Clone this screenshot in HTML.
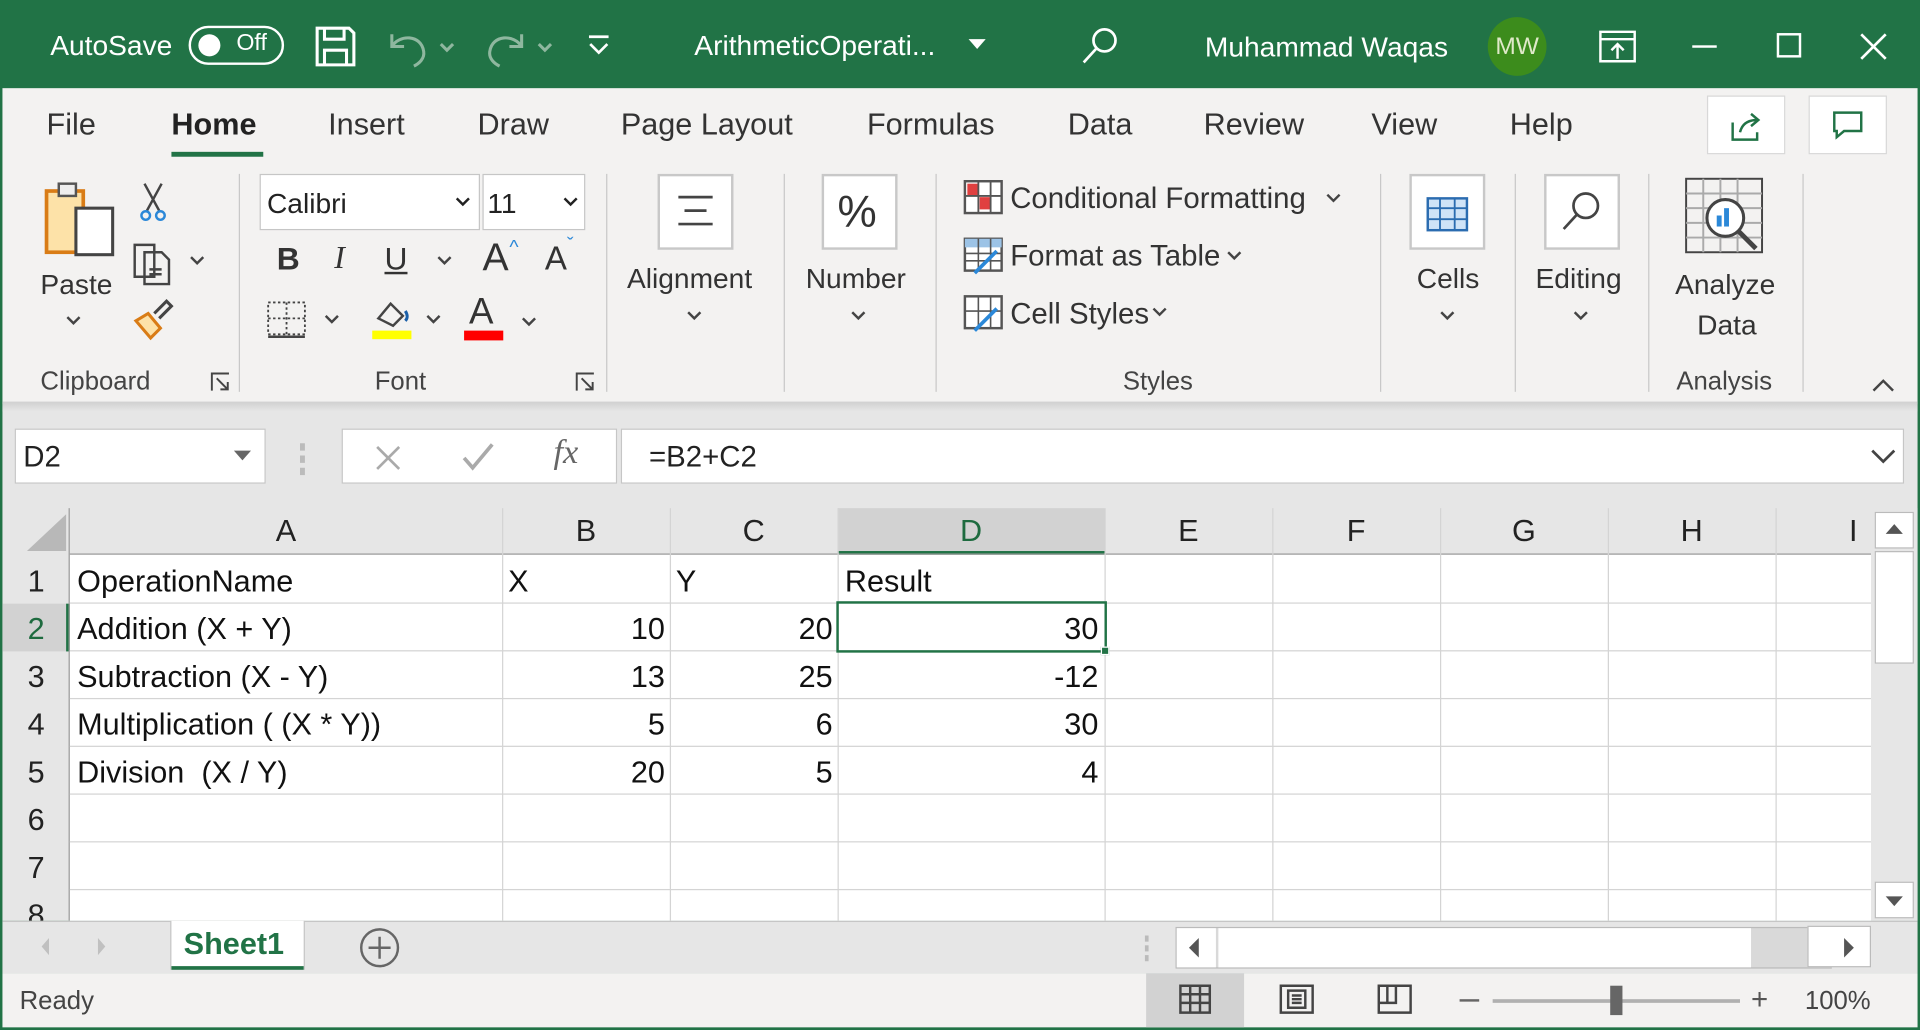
<!DOCTYPE html>
<html><head><meta charset="utf-8"><style>
*{margin:0;padding:0;box-sizing:border-box}
html,body{width:1920px;height:1030px;overflow:hidden;background:#217346}
#w{position:absolute;left:0;top:0;width:1568px;height:841px;transform:scale(1.22449);transform-origin:0 0;font-family:"Liberation Sans",sans-serif;color:#222;background:#217346}
.a{position:absolute;white-space:nowrap}
.t{color:#fff;font-size:23px}
.tab{font-size:25px;color:#333;top:88px}
.gl{font-size:21px;color:#444;top:300px}
.sep{position:absolute;width:1px;background:#c8c8c8;top:142px;height:178px}
.cell{position:absolute;font-size:25px;color:#111}
.hd{position:absolute;font-size:25px;color:#222;text-align:center}
.vl{position:absolute;top:415px;width:1px;height:337px;background:#d4d4d4}
.hl{position:absolute;left:57px;width:1471px;height:1px;background:#d4d4d4}
</style></head><body><div id="w">
<!-- title bar -->
<div class="a t" style="left:41px;top:24px">AutoSave</div>
<div class="a" style="left:154px;top:21px;width:78px;height:32px;border:2px solid #fff;border-radius:16px"></div>
<div class="a" style="left:162px;top:28px;width:18px;height:18px;border-radius:9px;background:#fff"></div>
<div class="a t" style="left:193px;top:25px;font-size:19px">Off</div>
<svg class="a" style="left:256px;top:20px" width="36" height="36" viewBox="0 0 36 36" fill="none" stroke="#fff" stroke-width="2.5"><path d="M3 3h26l4 4v26H3z M9 3v9h16V3 M9 33V21h18v12"/></svg>
<svg class="a" style="left:314px;top:20px" width="62" height="36" viewBox="0 0 62 36" fill="none" stroke="#8fb79f" stroke-width="2.5"><path d="M6 8v10h10 M6 18c6-10 24-10 26 4 1 6-4 10-8 12"/><path d="M46 16l5 5 5-5"/></svg>
<svg class="a" style="left:394px;top:20px" width="62" height="36" viewBox="0 0 62 36" fill="none" stroke="#8fb79f" stroke-width="2.5"><path d="M32 8v10H22 M32 18c-6-10-24-10-26 4-1 6 4 10 8 12"/><path d="M46 16l5 5 5-5"/></svg>
<svg class="a" style="left:478px;top:26px" width="22" height="22" viewBox="0 0 22 22" fill="none" stroke="#fff" stroke-width="2.2"><path d="M3 4h16 M4 10l7 7 7-7"/></svg>
<div class="a t" style="left:567px;top:24px">ArithmeticOperati...</div>
<svg class="a" style="left:790px;top:30px" width="16" height="12"><path d="M1 2h14L8 10z" fill="#fff"/></svg>
<svg class="a" style="left:882px;top:20px" width="34" height="34" fill="none" stroke="#fff" stroke-width="2.2"><circle cx="20" cy="13" r="9"/><path d="M13 20L3 31"/></svg>
<div class="a t" style="left:984px;top:25px">Muhammad Waqas</div>
<div class="a" style="left:1215px;top:14px;width:48px;height:48px;border-radius:24px;background:#3c8c1c;color:#dfe9c8;font-size:20px;text-align:center;line-height:48px">MW</div>
<svg class="a" style="left:1305px;top:24px" width="32" height="28" fill="none" stroke="#fff" stroke-width="2"><path d="M2 2h28v24H2z M2 8h28 M16 24V12 M11 17l5-5 5 5"/></svg>
<div class="a" style="left:1382px;top:37px;width:20px;height:2px;background:#fff"></div>
<div class="a" style="left:1451px;top:27px;width:20px;height:20px;border:2px solid #fff"></div>
<svg class="a" style="left:1518px;top:26px" width="24" height="24" stroke="#fff" stroke-width="2.2"><path d="M2 2l20 20M22 2L2 22"/></svg>
<!-- ribbon -->
<div class="a" style="left:2px;top:72px;width:1564px;height:258px;background:#f3f2f1"></div>
<div class="a tab" style="left:38px">File</div>
<div class="a tab" style="left:140px;font-weight:bold;color:#222">Home</div>
<div class="a" style="left:140px;top:124px;width:75px;height:4px;background:#217346"></div>
<div class="a tab" style="left:268px">Insert</div>
<div class="a tab" style="left:390px">Draw</div>
<div class="a tab" style="left:507px">Page Layout</div>
<div class="a tab" style="left:708px">Formulas</div>
<div class="a tab" style="left:872px">Data</div>
<div class="a tab" style="left:983px">Review</div>
<div class="a tab" style="left:1120px">View</div>
<div class="a tab" style="left:1233px">Help</div>
<div class="a" style="left:1394px;top:78px;width:64px;height:48px;background:#fff;border:1px solid #d8d8d8"></div>
<svg class="a" style="left:1412px;top:90px" width="28" height="26" fill="none" stroke="#217346" stroke-width="2"><path d="M3 10v14h20v-6 M9 18c2-8 8-10 14-10 M18 3l6 5-6 5"/></svg>
<div class="a" style="left:1477px;top:78px;width:64px;height:48px;background:#fff;border:1px solid #d8d8d8"></div>
<svg class="a" style="left:1496px;top:90px" width="26" height="24" fill="none" stroke="#217346" stroke-width="2"><path d="M2 2h22v15H10l-6 5v-5H2z"/></svg>
<!-- clipboard -->
<svg class="a" style="left:34px;top:148px" width="62" height="64"><rect x="4" y="8" width="30" height="50" fill="#fde2a8" stroke="#d97c16" stroke-width="3"/><rect x="14" y="2" width="14" height="10" fill="#eee" stroke="#555" stroke-width="2"/><rect x="28" y="22" width="30" height="38" fill="#fff" stroke="#444" stroke-width="2.5"/></svg>
<div class="a" style="left:33px;top:219px;font-size:23px;color:#333">Paste</div>
<svg class="a" style="left:52px;top:256px" width="16" height="12" fill="none" stroke="#444" stroke-width="2"><path d="M3 3l5 5 5-5"/></svg>
<svg class="a" style="left:112px;top:148px" width="26" height="34" fill="none" stroke="#444" stroke-width="2"><path d="M6 2l12 22 M20 2L8 24"/><circle cx="7" cy="28" r="3.5" stroke="#2b88d8"/><circle cx="19" cy="28" r="3.5" stroke="#2b88d8"/></svg>
<svg class="a" style="left:108px;top:198px" width="60" height="36" fill="none" stroke="#444" stroke-width="2"><path d="M2 2h16v26H2z M10 8h14l6 6v20H10z M14 22h10 M14 26h10"/><path d="M48 12l5 5 5-5"/></svg>
<svg class="a" style="left:108px;top:244px" width="36" height="36" fill="none" stroke="#d97c16" stroke-width="2.5"><path d="M3 18l10-6 10 12-8 8z" fill="#fde2a8"/><path d="M18 12l10-10 4 4-10 10" stroke="#444"/></svg>
<div class="a gl" style="left:33px">Clipboard</div>
<svg class="a" style="left:172px;top:304px" width="16" height="16" fill="none" stroke="#444" stroke-width="1.6"><path d="M1 15V1h14 M5 5l9 9 M14 8v6H8"/></svg>
<div class="sep" style="left:195px"></div>
<!-- font -->
<div class="a" style="left:212px;top:142px;width:180px;height:46px;background:#fff;border:1px solid #c6c6c6"></div>
<div class="a" style="left:218px;top:153px;font-size:23px">Calibri</div>
<svg class="a" style="left:371px;top:160px" width="14" height="10" fill="none" stroke="#222" stroke-width="2"><path d="M2 2l5 5 5-5"/></svg>
<div class="a" style="left:394px;top:142px;width:84px;height:46px;background:#fff;border:1px solid #c6c6c6"></div>
<div class="a" style="left:398px;top:153px;font-size:23px">11</div>
<svg class="a" style="left:459px;top:160px" width="14" height="10" fill="none" stroke="#222" stroke-width="2"><path d="M2 2l5 5 5-5"/></svg>
<div class="a" style="left:226px;top:196px;font-size:26px;font-weight:bold;color:#333">B</div>
<div class="a" style="left:273px;top:196px;font-size:26px;font-style:italic;font-family:'Liberation Serif',serif;color:#333">I</div>
<div class="a" style="left:314px;top:196px;font-size:26px;text-decoration:underline;color:#333">U</div>
<svg class="a" style="left:356px;top:208px" width="14" height="10" fill="none" stroke="#444" stroke-width="2"><path d="M2 2l5 5 5-5"/></svg>
<div class="a" style="left:307px;top:230px;width:1px;height:0"></div>
<div class="a" style="left:394px;top:192px;font-size:32px;color:#333">A</div>
<div class="a" style="left:416px;top:194px;font-size:16px;color:#2b88d8">^</div>
<div class="a" style="left:445px;top:196px;font-size:27px;color:#333">A</div>
<div class="a" style="left:463px;top:192px;font-size:16px;color:#2b88d8">ˇ</div>
<svg class="a" style="left:216px;top:244px" width="62" height="34" fill="none" stroke="#444" stroke-width="1.5" stroke-dasharray="2 2"><path d="M3 3h30v26H3z M18 3v26 M3 16h30"/><path d="M3 31h30" stroke-dasharray="none" stroke-width="2"/><path d="M50 14l5 5 5-5" stroke-dasharray="none" stroke-width="2"/></svg>
<svg class="a" style="left:303px;top:242px" width="62" height="38"><path d="M6 18l10-12 10 10-8 8z" fill="none" stroke="#444" stroke-width="2"/><path d="M28 12c2 3 2 6 0 8" stroke="#1a5fa8" stroke-width="2.5" fill="none"/><rect x="1" y="28" width="32" height="7" fill="#ffff00"/><path d="M46 16l5 5 5-5" fill="none" stroke="#444" stroke-width="2"/></svg>
<div class="a" style="left:383px;top:238px;font-size:30px;color:#333">A</div>
<div class="a" style="left:379px;top:270px;width:32px;height:8px;background:#f00"></div>
<svg class="a" style="left:425px;top:258px" width="14" height="10" fill="none" stroke="#444" stroke-width="2"><path d="M2 2l5 5 5-5"/></svg>
<div class="a gl" style="left:306px">Font</div>
<svg class="a" style="left:470px;top:304px" width="16" height="16" fill="none" stroke="#444" stroke-width="1.6"><path d="M1 15V1h14 M5 5l9 9 M14 8v6H8"/></svg>
<div class="sep" style="left:495px"></div>
<!-- alignment -->
<div class="a" style="left:537px;top:142px;width:62px;height:62px;background:#fff;border:2px solid #c8c8c8"></div>
<svg class="a" style="left:552px;top:158px" width="32" height="30" stroke="#444" stroke-width="2.2"><path d="M2 3h28 M7 14h18 M2 25h28"/></svg>
<div class="a" style="left:512px;top:214px;font-size:23px;color:#333">Alignment</div>
<svg class="a" style="left:559px;top:252px" width="16" height="12" fill="none" stroke="#444" stroke-width="2"><path d="M3 3l5 5 5-5"/></svg>
<div class="sep" style="left:640px"></div>
<div class="a" style="left:671px;top:142px;width:62px;height:62px;background:#fff;border:2px solid #c8c8c8"></div>
<div class="a" style="left:684px;top:152px;font-size:36px;color:#333">%</div>
<div class="a" style="left:658px;top:214px;font-size:23px;color:#333">Number</div>
<svg class="a" style="left:693px;top:252px" width="16" height="12" fill="none" stroke="#444" stroke-width="2"><path d="M3 3l5 5 5-5"/></svg>
<div class="sep" style="left:764px"></div>
<!-- styles -->
<svg class="a" style="left:786px;top:146px" width="34" height="32"><rect x="2" y="2" width="30" height="26" fill="#fff" stroke="#555" stroke-width="2"/><rect x="4" y="4" width="9" height="10" fill="#e04040"/><rect x="14" y="15" width="9" height="10" fill="#e04040"/><path d="M2 14h30 M13 2v26 M23 2v26" stroke="#555" stroke-width="1.5"/></svg>
<div class="a" style="left:825px;top:149px;font-size:24px;color:#333">Conditional Formatting</div>
<svg class="a" style="left:1082px;top:157px" width="14" height="10" fill="none" stroke="#444" stroke-width="2"><path d="M2 2l5 5 5-5"/></svg>
<svg class="a" style="left:786px;top:193px" width="34" height="32"><rect x="2" y="2" width="30" height="26" fill="#fff" stroke="#555" stroke-width="2"/><rect x="2" y="2" width="30" height="7" fill="#9cc3e6"/><path d="M2 14h30 M2 20h30 M13 2v26 M23 2v26" stroke="#555" stroke-width="1.3"/><path d="M10 30l18-18" stroke="#2b88d8" stroke-width="3"/></svg>
<div class="a" style="left:825px;top:196px;font-size:24px;color:#333">Format as Table</div>
<svg class="a" style="left:1001px;top:204px" width="14" height="10" fill="none" stroke="#444" stroke-width="2"><path d="M2 2l5 5 5-5"/></svg>
<svg class="a" style="left:786px;top:240px" width="34" height="32"><rect x="2" y="2" width="30" height="26" fill="#fff" stroke="#555" stroke-width="2"/><path d="M2 14h30 M13 2v26 M23 2v26" stroke="#555" stroke-width="1.3"/><path d="M10 30l18-18" stroke="#2b88d8" stroke-width="3"/></svg>
<div class="a" style="left:825px;top:243px;font-size:24px;color:#333">Cell Styles</div>
<svg class="a" style="left:940px;top:250px" width="14" height="10" fill="none" stroke="#444" stroke-width="2"><path d="M2 2l5 5 5-5"/></svg>
<div class="a gl" style="left:917px">Styles</div>
<div class="sep" style="left:1127px"></div>
<div class="a" style="left:1151px;top:142px;width:62px;height:62px;background:#fff;border:2px solid #c8c8c8"></div>
<svg class="a" style="left:1164px;top:156px" width="36" height="34"><rect x="2" y="6" width="32" height="26" fill="#cfe3f7" stroke="#2b6cb0" stroke-width="2"/><path d="M2 14h32 M2 23h32 M12 6v26 M24 6v26" stroke="#2b6cb0" stroke-width="1.5"/></svg>
<div class="a" style="left:1157px;top:214px;font-size:23px;color:#333">Cells</div>
<svg class="a" style="left:1174px;top:252px" width="16" height="12" fill="none" stroke="#444" stroke-width="2"><path d="M3 3l5 5 5-5"/></svg>
<div class="sep" style="left:1237px"></div>
<div class="a" style="left:1261px;top:142px;width:62px;height:62px;background:#fff;border:2px solid #c8c8c8"></div>
<svg class="a" style="left:1274px;top:154px" width="36" height="36" fill="none" stroke="#444" stroke-width="2.2"><circle cx="21" cy="14" r="10"/><path d="M14 21L3 33"/></svg>
<div class="a" style="left:1254px;top:214px;font-size:23px;color:#333">Editing</div>
<svg class="a" style="left:1283px;top:252px" width="16" height="12" fill="none" stroke="#444" stroke-width="2"><path d="M3 3l5 5 5-5"/></svg>
<div class="sep" style="left:1346px"></div>
<svg class="a" style="left:1375px;top:144px" width="70" height="68" fill="none" stroke="#444" stroke-width="1.6"><rect x="2" y="2" width="62" height="60"/><path d="M2 14h62 M2 26h62 M2 38h62 M2 50h62 M16 2v60 M30 2v60 M44 2v60" stroke="#aaa"/><circle cx="34" cy="34" r="15" fill="#fff" stroke="#444" stroke-width="2.5"/><rect x="27" y="32" width="4" height="9" fill="#2b88d8" stroke="none"/><rect x="33" y="26" width="4" height="15" fill="#2b88d8" stroke="none"/><path d="M45 45l14 14" stroke-width="4"/></svg>
<div class="a" style="left:1368px;top:219px;font-size:23px;color:#333">Analyze</div>
<div class="a" style="left:1386px;top:252px;font-size:23px;color:#333">Data</div>
<div class="a gl" style="left:1369px">Analysis</div>
<div class="sep" style="left:1472px"></div>
<svg class="a" style="left:1528px;top:308px" width="20" height="14" fill="none" stroke="#444" stroke-width="2"><path d="M2 11l8-8 8 8"/></svg>
<!-- formula area -->
<div class="a" style="left:2px;top:328px;width:1564px;height:424px;background:#e6e6e6"></div>
<div class="a" style="left:2px;top:328px;width:1564px;height:8px;background:linear-gradient(#d0d0d0,#e6e6e6)"></div>
<div class="a" style="left:12px;top:350px;width:205px;height:45px;background:#fff;border:1px solid #c6c6c6"></div>
<div class="a" style="left:19px;top:360px;font-size:24px">D2</div>
<svg class="a" style="left:190px;top:366px" width="16" height="12"><path d="M1 2h14L8 10z" fill="#666"/></svg>
<div class="a" style="left:245px;top:362px;width:4px;height:6px;background:#bbb;box-shadow:0 10px 0 #bbb,0 20px 0 #bbb"></div>
<div class="a" style="left:279px;top:350px;width:225px;height:45px;background:#fff;border:1px solid #c6c6c6"></div>
<svg class="a" style="left:305px;top:362px" width="24" height="24" stroke="#aaa" stroke-width="2.2"><path d="M3 3l18 18M21 3L3 21"/></svg>
<svg class="a" style="left:376px;top:360px" width="30" height="26" fill="none" stroke="#aaa" stroke-width="3"><path d="M3 14l7 8L26 3"/></svg>
<div class="a" style="left:452px;top:354px;font-size:28px;font-style:italic;font-family:'Liberation Serif',serif;color:#666">fx</div>
<div class="a" style="left:507px;top:350px;width:1048px;height:45px;background:#fff;border:1px solid #c6c6c6"></div>
<div class="a" style="left:530px;top:360px;font-size:24px">=B2+C2</div>
<svg class="a" style="left:1527px;top:366px" width="22" height="14" fill="none" stroke="#444" stroke-width="2.2"><path d="M2 2l9 9 9-9"/></svg>
<!-- grid -->
<div class="a" style="left:57px;top:453px;width:1471px;height:299px;background:#fff"></div>
<svg class="a" style="left:20px;top:418px" width="36" height="34"><path d="M34 2v30H2z" fill="#b8b8b8"/></svg>
<div class="a" style="left:684px;top:415px;width:218px;height:38px;background:#d2d2d2;border-bottom:3px solid #217346"></div>
<div class="a" style="left:2px;top:493px;width:55px;height:39px;background:#d2d2d2;border-right:3px solid #217346"></div>
<div class="a" style="left:57px;top:452px;width:1471px;height:1px;background:#9b9b9b"></div>
<div class="a" style="left:56px;top:415px;width:1px;height:337px;background:#9b9b9b"></div>
<div class="vl" style="left:410px"></div><div class="vl" style="left:547px"></div><div class="vl" style="left:684px"></div><div class="vl" style="left:902px"></div><div class="vl" style="left:1039px"></div><div class="vl" style="left:1176px"></div><div class="vl" style="left:1313px"></div><div class="vl" style="left:1450px"></div>
<div class="hl" style="top:492px"></div><div class="hl" style="top:531px"></div><div class="hl" style="top:570px"></div><div class="hl" style="top:609px"></div><div class="hl" style="top:648px"></div><div class="hl" style="top:687px"></div><div class="hl" style="top:726px"></div>
<div class="hd" style="left:57px;width:353px;top:420px">A</div>
<div class="hd" style="left:410px;width:137px;top:420px">B</div>
<div class="hd" style="left:547px;width:137px;top:420px">C</div>
<div class="hd" style="left:684px;width:218px;top:420px;color:#1e6b3f">D</div>
<div class="hd" style="left:902px;width:137px;top:420px">E</div>
<div class="hd" style="left:1039px;width:137px;top:420px">F</div>
<div class="hd" style="left:1176px;width:137px;top:420px">G</div>
<div class="hd" style="left:1313px;width:137px;top:420px">H</div>
<div class="hd" style="left:1510px;top:420px">I</div>
<div class="hd" style="left:2px;width:55px;top:461px">1</div>
<div class="hd" style="left:2px;width:55px;top:500px;color:#1e6b3f">2</div>
<div class="hd" style="left:2px;width:55px;top:539px">3</div>
<div class="hd" style="left:2px;width:55px;top:578px">4</div>
<div class="hd" style="left:2px;width:55px;top:617px">5</div>
<div class="hd" style="left:2px;width:55px;top:656px">6</div>
<div class="hd" style="left:2px;width:55px;top:695px">7</div>
<div class="hd" style="left:2px;width:55px;top:734px;height:18px;overflow:hidden">8</div>
<div class="cell" style="left:63px;top:461px">OperationName</div>
<div class="cell" style="left:415px;top:461px">X</div>
<div class="cell" style="left:552px;top:461px">Y</div>
<div class="cell" style="left:690px;top:461px">Result</div>
<div class="cell" style="left:63px;top:500px">Addition (X + Y)</div>
<div class="cell" style="left:63px;top:539px">Subtraction (X - Y)</div>
<div class="cell" style="left:63px;top:578px">Multiplication ( (X * Y))</div>
<div class="cell" style="left:63px;top:617px">Division&nbsp; (X / Y)</div>
<div class="cell" style="right:1025px;top:500px">10</div><div class="cell" style="right:888px;top:500px">20</div><div class="cell" style="right:671px;top:500px">30</div>
<div class="cell" style="right:1025px;top:539px">13</div><div class="cell" style="right:888px;top:539px">25</div><div class="cell" style="right:671px;top:539px">-12</div>
<div class="cell" style="right:1025px;top:578px">5</div><div class="cell" style="right:888px;top:578px">6</div><div class="cell" style="right:671px;top:578px">30</div>
<div class="cell" style="right:1025px;top:617px">20</div><div class="cell" style="right:888px;top:617px">5</div><div class="cell" style="right:671px;top:617px">4</div>
<div class="a" style="left:683px;top:491px;width:221px;height:42px;border:2px solid #217346"></div>
<div class="a" style="left:899px;top:528px;width:7px;height:7px;background:#217346;border:1px solid #fff"></div>
<!-- vscroll -->
<div class="a" style="left:1528px;top:415px;width:38px;height:337px;background:#e6e6e6"></div>
<div class="a" style="left:1531px;top:418px;width:32px;height:30px;background:#fff;border:1px solid #bbb"></div>
<svg class="a" style="left:1539px;top:427px" width="16" height="10"><path d="M1 9L8 1l7 8z" fill="#555"/></svg>
<div class="a" style="left:1531px;top:450px;width:32px;height:92px;background:#fff;border:1px solid #bbb"></div>
<div class="a" style="left:1531px;top:720px;width:32px;height:30px;background:#fff;border:1px solid #bbb"></div>
<svg class="a" style="left:1539px;top:731px" width="16" height="10"><path d="M1 1l7 8 7-8z" fill="#555"/></svg>
<!-- sheet tabs -->
<div class="a" style="left:2px;top:752px;width:1564px;height:43px;background:#e6e6e6;border-top:1px solid #c6c6c6"></div>
<svg class="a" style="left:30px;top:764px" width="60" height="18"><path d="M10 2L4 9l6 7z M50 2l6 7-6 7z" fill="#c0c0c0"/></svg>
<div class="a" style="left:140px;top:752px;width:108px;height:40px;background:#fff;border-bottom:3px solid #217346;box-shadow:1px 0 0 #c6c6c6,-1px 0 0 #c6c6c6"></div>
<div class="a" style="left:150px;top:757px;font-size:25px;font-weight:bold;color:#217346">Sheet1</div>
<svg class="a" style="left:292px;top:756px" width="36" height="36" fill="none" stroke="#666" stroke-width="2"><circle cx="18" cy="18" r="15"/><path d="M18 9v18M9 18h18"/></svg>
<div class="a" style="left:935px;top:764px;width:3px;height:5px;background:#bbb;box-shadow:0 8px 0 #bbb,0 16px 0 #bbb"></div>
<div class="a" style="left:960px;top:757px;width:536px;height:34px;background:#d9d9d9;border:1px solid #bbb"></div>
<div class="a" style="left:961px;top:758px;width:32px;height:32px;background:#fff"></div>
<svg class="a" style="left:970px;top:765px" width="10" height="18"><path d="M9 1L1 9l8 8z" fill="#555"/></svg>
<div class="a" style="left:995px;top:758px;width:435px;height:32px;background:#fff"></div>
<div class="a" style="left:1476px;top:756px;width:52px;height:34px;background:#fff;border:1px solid #bbb"></div>
<svg class="a" style="left:1505px;top:765px" width="10" height="18"><path d="M1 1l8 8-8 8z" fill="#555"/></svg>
<!-- status -->
<div class="a" style="left:2px;top:795px;width:1564px;height:44px;background:#f3f2f1"></div>
<div class="a" style="left:16px;top:806px;font-size:21px;color:#444">Ready</div>
<div class="a" style="left:936px;top:795px;width:80px;height:44px;background:#d2d2d2"></div>
<svg class="a" style="left:962px;top:803px" width="28" height="26" fill="none" stroke="#444" stroke-width="2"><path d="M2 2h24v22H2z M2 9h24 M2 16h24 M10 2v22 M18 2v22"/></svg>
<svg class="a" style="left:1044px;top:803px" width="30" height="26" fill="none" stroke="#444" stroke-width="2"><path d="M2 2h26v22H2z M8 6h14v14H8z M11 10h8 M11 13h8 M11 16h8"/></svg>
<svg class="a" style="left:1124px;top:803px" width="30" height="26" fill="none" stroke="#444" stroke-width="2"><path d="M2 2h26v22H2z M2 16h14V2 M9 2v14"/></svg>
<div class="a" style="left:1192px;top:816px;width:16px;height:2px;background:#666"></div>
<div class="a" style="left:1219px;top:816px;width:202px;height:3px;background:#b0b0b0"></div>
<div class="a" style="left:1315px;top:805px;width:10px;height:24px;background:#666"></div>
<div class="a" style="left:1430px;top:803px;font-size:24px;color:#555">+</div>
<div class="a" style="left:1474px;top:806px;font-size:21px;color:#444">100%</div>
</div></body></html>
